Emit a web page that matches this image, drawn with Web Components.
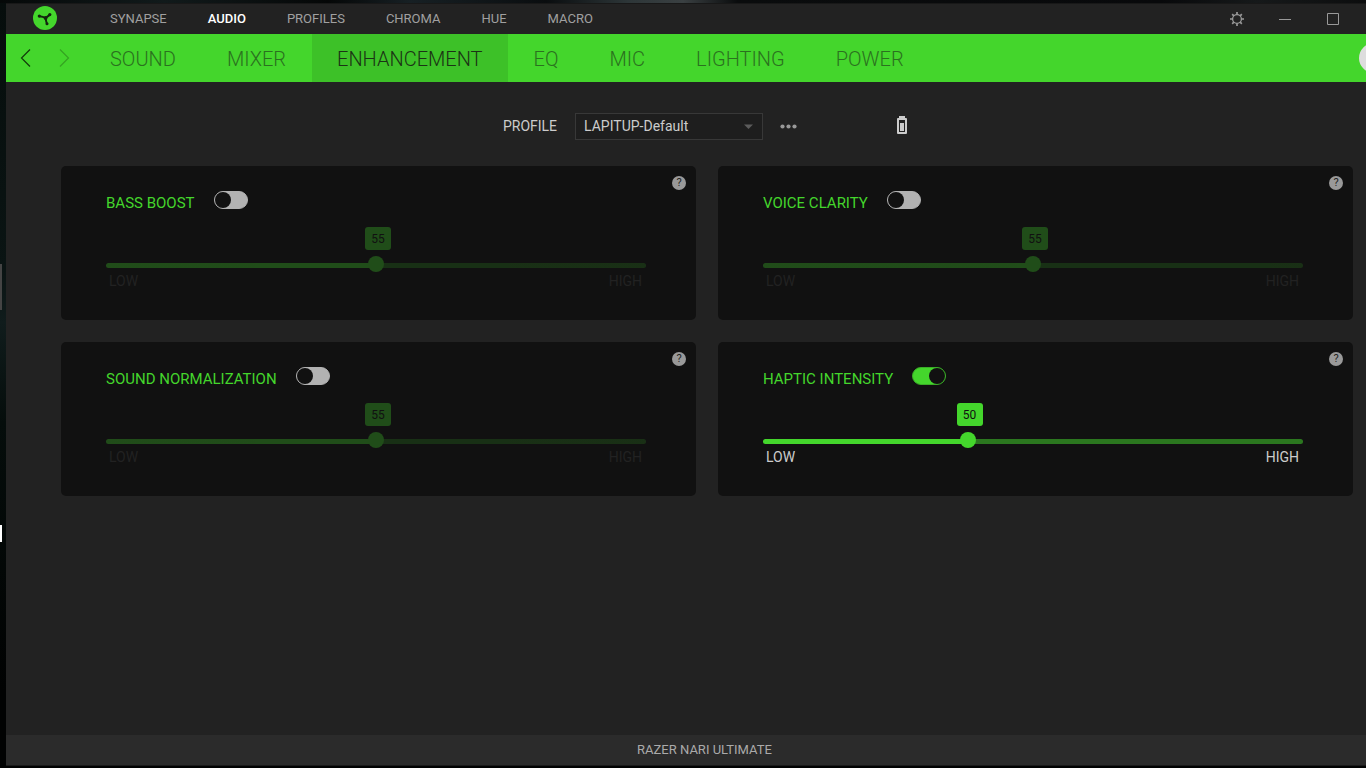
<!DOCTYPE html>
<html lang="en">
<head>
<meta charset="utf-8">
<title>Razer Synapse - Enhancement</title>
<style>
  html, body { height: 100%; }
  body { margin: 0; overflow: hidden; background: #020303; color: #ccc; font-family: Roboto, "Liberation Sans", sans-serif; }
</style>
</head>
<body>
<synapse-window>
  <title-bar slot="header"></title-bar>
  <tab-bar slot="header"></tab-bar>
  <profile-bar></profile-bar>
  <card-grid>
    <setting-card name="BASS BOOST" min="10" max="100" value="55"></setting-card>
    <setting-card name="VOICE CLARITY" min="10" max="100" value="55"></setting-card>
    <setting-card name="SOUND NORMALIZATION" min="10" max="100" value="55"></setting-card>
    <setting-card name="HAPTIC INTENSITY" min="20" max="100" value="50" enabled></setting-card>
  </card-grid>
  <device-footer slot="footer">RAZER NARI ULTIMATE</device-footer>
</synapse-window>

<script>
class BaseElement extends HTMLElement {
  connectedCallback() {
    if (this.shadowRoot) return;
    this.attachShadow({ mode: 'open' }).innerHTML = this.render();
    this.ready();
  }
  ready() {}
}

customElements.define('synapse-window', class extends BaseElement {
  render() { return `
    <style>
      :host { display: block; box-sizing: border-box; height: 100vh; padding: 3px 0 2px 6px;
        background:
          linear-gradient(#fff, #fff) 0 525px / 2px 17px no-repeat,
          linear-gradient(#444, #444) 0 264px / 2px 46px no-repeat,
          linear-gradient(90deg, #050808, #111a1b 12%, #050707 24%, #172024 30%, #0a0d0f 40%, #2d3638 46%, #3a4042 50%, #0a0c0d 54%, #08090b 85%, #16191a 92%, #0c0d0e) 0 0 / 100% 3px no-repeat,
          linear-gradient(#060d0c, #0a1413 35%, #101c1c 42%, #050d0b 55%, #010202 90%); }
      .frame { display: flex; flex-direction: column; height: 100%; box-sizing: border-box; overflow: hidden;
        background: #222; border-bottom: 1px solid #1a1a1a; }
      main { flex: 1; display: flex; flex-direction: column; padding: 31px 13px 0 55px; gap: 26px; }
    </style>
    <div class="frame"><slot name="header"></slot><main><slot></slot></main><slot name="footer"></slot></div>`; }
});

customElements.define('title-bar', class extends BaseElement {
  render() {
    const items = ['SYNAPSE', 'AUDIO', 'PROFILES', 'CHROMA', 'HUE', 'MACRO'];
    return `
    <style>
      :host { display: flex; align-items: center; height: 30px; border-top: 1px solid #181818; padding: 0 23px 0 27px; background: #222; }
      .logo { width: 24px; height: 24px; margin: 0 53px 2px 0; }
      nav { display: flex; gap: 41px; }
      a { color: #a0a0a0; text-decoration: none; font-size: 13px; line-height: 16px; }
      a[aria-current] { color: #fff; font-weight: 500; }
      .controls { display: flex; gap: 28px; margin-left: auto; }
      button { display: grid; place-items: center; width: 20px; height: 20px; padding: 0; border: 0; background: none; }
      svg { display: block; }
    </style>
    <svg class="logo" viewBox="0 0 24 24" aria-hidden="true">
      <circle cx="12" cy="12" r="12" fill="#44d62c"/>
      <path d="M6.5 10.2 Q10 10.5 12.6 12 L17 8.6 M12.6 12 Q12.9 15 14 18" fill="none" stroke="#14240f" stroke-width="2"/>
      <g fill="#14240f"><circle cx="6.3" cy="10.1" r="1.6"/><circle cx="16.8" cy="8.6" r="1.6"/><circle cx="14" cy="17.8" r="1.5"/><circle cx="12.6" cy="12" r="1.9"/></g>
    </svg>
    <nav aria-label="Modules">${items.map(t => `<a href="#"${t === 'AUDIO' ? ' aria-current="page"' : ''}>${t}</a>`).join('')}</nav>
    <div class="controls">
      <button aria-label="Settings"><svg width="14" height="14" viewBox="0 0 14 14" fill="none" stroke="#999"><circle cx="7" cy="7" r="4.4" stroke-width="1.3"/><path stroke-width="1.7" d="M7 0v2.6M7 11.4V14M0 7h2.6M11.4 7H14M2.2 2.2l1.6 1.6M10.2 10.2l1.6 1.6M2.2 11.8l1.6-1.6M10.2 3.8l1.6-1.6"/></svg></button>
      <button aria-label="Minimize"><svg width="12" height="12" viewBox="0 0 12 12"><path d="M0 6.5h12" stroke="#999"/></svg></button>
      <button aria-label="Maximize"><svg width="12" height="12" viewBox="0 0 12 12"><path d="M.5.5h11v11H.5z" fill="none" stroke="#999"/></svg></button>
    </div>`;
  }
});

customElements.define('tab-bar', class extends BaseElement {
  render() {
    const tabs = ['SOUND', 'MIXER', 'ENHANCEMENT', 'EQ', 'MIC', 'LIGHTING', 'POWER'];
    return `
    <style>
      :host { display: flex; height: 48px; background: #44d62c; }
      .arrows { display: flex; align-items: center; gap: 18px; padding: 0 10px 0 9px; }
      .arrows button { display: grid; place-items: center; width: 21px; height: 24px; padding: 0; border: 0; background: none; color: #123a0b; }
      .arrows button:disabled { color: #35a322; }
      nav { display: flex; gap: 1px; }
      a { padding: 0 25px; font-size: 20px; font-weight: 300; line-height: 50px; color: #2b711f; text-decoration: none; }
      a[aria-current] { background: #3dc128; color: #1b3315; }
      .avatar { align-self: center; flex: none; width: 30px; height: 30px; margin: 0 -23px 0 auto; padding: 0; border: 0; border-radius: 50%; background: #ddd; }
    </style>
    <div class="arrows">
      <button aria-label="Back"><svg width="11" height="18" viewBox="0 0 11 18" fill="none" stroke="currentColor" stroke-width="1.2"><path d="M10 .5 1.5 9l8.500 8.500"/></svg></button>
      <button aria-label="Forward" disabled><svg width="11" height="18" viewBox="0 0 11 18" fill="none" stroke="currentColor" stroke-width="1.2"><path d="M1 .5 9.500 9 1 17.500"/></svg></button>
    </div>
    <nav aria-label="Audio settings">${tabs.map(t => `<a href="#"${t === 'ENHANCEMENT' ? ' aria-current="page"' : ''}>${t}</a>`).join('')}</nav>
    <button class="avatar" aria-label="Account"></button>`;
  }
});

customElements.define('profile-bar', class extends BaseElement {
  render() { return `
    <style>
      :host { display: flex; justify-content: center; align-items: center; height: 27px; padding-right: 4px; font-size: 14px; color: #ccc; }
      .select { display: grid; align-items: center; width: 188px; margin: 0 16px 0 18px; }
      .select > * { grid-area: 1 / 1; }
      select { appearance: none; width: 100%; height: 27px; margin: 0; padding: 0 24px 2px 8px; border: 1px solid #383838; border-radius: 0; background: #1e1e1e; color: #ccc; font: inherit; }
      label { padding-bottom: 2px; }
      .arrow { justify-self: end; margin-right: 10px; pointer-events: none; }
      button { display: grid; place-items: center; width: 18px; height: 18px; padding: 0; border: 0; background: none; margin-right: 100px; }
      svg { display: block; }
      .battery { margin-bottom: 3px; }
    </style>
    <label for="profile">PROFILE</label>
    <div class="select">
      <select id="profile"><option>LAPITUP-Default</option></select>
      <svg class="arrow" width="9" height="5" viewBox="0 0 9 5"><path d="M0 .5h9L4.500 5z" fill="#5c5c5c"/></svg>
    </div>
    <button aria-label="More profile actions"><svg width="17" height="5" viewBox="0 0 17 5" fill="#999"><circle cx="2.500" cy="2.500" r="2.100"/><circle cx="8.500" cy="2.500" r="2.100"/><circle cx="14.500" cy="2.500" r="2.100"/></svg></button>
    <svg class="battery" width="10" height="18" viewBox="0 0 10 18" role="img" aria-label="Battery">
      <path fill="#ccc" fill-rule="evenodd" d="M2 0h6v2h1q1 0 1 1v14q0 1-1 1H1q-1 0-1-1V3q0-1 1-1h1zM2 4v12h6V4z"/><path fill="#ccc" d="M3 7h4v8H3z"/>
    </svg>`; }
});

customElements.define('card-grid', class extends BaseElement {
  render() { return `
    <style>:host { display: grid; grid-template-columns: 1fr 1fr; gap: 22px; }</style><slot></slot>`; }
});

customElements.define('toggle-switch', class extends BaseElement {
  render() { return `
    <style>
      :host { display: block; height: 18px; }
      input { appearance: none; display: flex; width: 34px; height: 18px; margin: 0; box-sizing: border-box; border: 1px solid #b2b2b2; border-radius: 9px; background: #b2b2b2; }
      input::before { content: ""; width: 16px; height: 16px; border-radius: 50%; background: #111; }
      input:checked { justify-content: flex-end; background: #44d62c; border-color: #3aae27; }
    </style>
    <input type="checkbox" role="switch" aria-label="${this.getAttribute('label')}"${this.hasAttribute('checked') ? ' checked' : ''}>`; }
});

customElements.define('value-slider', class extends BaseElement {
  render() {
    const [min, max, value] = ['min', 'max', 'value'].map(n => this.getAttribute(n));
    return `
    <style>
      :host { display: block; position: relative; --at: calc(8px + (100% - 16px) * var(--ratio)); }
      .control { padding-top: 28px; }
      :host([disabled]) .control { opacity: .3; }
      output { position: absolute; top: 0; left: calc(var(--at) + 2px); margin-left: -13px; width: 26px; height: 23px; border-radius: 3px; background: #44d62c; color: #111; font-size: 12px; line-height: 24px; text-align: center; }
      input { appearance: none; display: block; width: 100%; height: 20px; margin: 0; background: none; }
      input::-webkit-slider-runnable-track { height: 5px; margin-top: 1px; border-radius: 3px; background: linear-gradient(90deg, #44d62c var(--at), #2b771f var(--at)); }
      input::-webkit-slider-thumb { appearance: none; width: 16px; height: 16px; margin-top: -7px; border-radius: 50%; background: #44d62c; }
      .ends { display: flex; justify-content: space-between; padding: 0 4px 0 3px; font-size: 14px; line-height: 12px; color: #ccc; }
      :host([disabled]) .ends { color: #222; }
    </style>
    <div class="control"><output for="range">${value}</output>
    <input id="range" type="range" min="${min}" max="${max}" value="${value}" aria-label="${this.getAttribute('label')}"${this.hasAttribute('disabled') ? ' disabled' : ''}></div>
    <div class="ends"><span>LOW</span><span>HIGH</span></div>`;
  }
  ready() {
    const input = this.shadowRoot.querySelector('input');
    const output = this.shadowRoot.querySelector('output');
    const update = () => {
      this.style.setProperty('--ratio', (input.value - input.min) / (input.max - input.min));
      output.value = input.value;
    };
    input.addEventListener('input', update);
    update();
  }
});

customElements.define('setting-card', class extends BaseElement {
  render() {
    const name = this.getAttribute('name');
    const on = this.hasAttribute('enabled');
    const attr = n => `${n}="${this.getAttribute(n)}"`;
    return `
    <style>
      :host { display: block; position: relative; box-sizing: border-box; height: 154px; padding: 25px 50px 0 45px; border-radius: 5px; background: #111; }
      header { display: flex; gap: 19px; height: 36px; }
      h2 { margin: 0; font-size: 15px; font-weight: 400; line-height: 24px; color: #44d62c; }
      .help { position: absolute; top: 10px; right: 10px; width: 14px; height: 14px; padding: 0; border: 0; border-radius: 50%; background: #999; color: #222; font: 400 11px/14px Roboto, sans-serif; text-align: center; }
    </style>
    <header><h2>${name}</h2><toggle-switch label="${name}"${on ? ' checked' : ''}></toggle-switch></header>
    <value-slider label="${name}" ${attr('min')} ${attr('max')} ${attr('value')}${on ? '' : ' disabled'}></value-slider>
    <button class="help" aria-label="About ${name}">?</button>`;
  }
  ready() {
    const toggle = this.shadowRoot.querySelector('toggle-switch').shadowRoot.querySelector('input');
    const slider = this.shadowRoot.querySelector('value-slider');
    toggle.addEventListener('change', () => {
      slider.toggleAttribute('disabled', !toggle.checked);
      slider.shadowRoot.querySelector('input').disabled = !toggle.checked;
    });
  }
});

customElements.define('device-footer', class extends BaseElement {
  render() { return `
    <style>:host { display: block; padding-left: 37px; background: #2b2b2b; color: #aaa; font-size: 13px; line-height: 30px; text-align: center; }</style><slot></slot>`; }
});
</script>
</body>
</html>
